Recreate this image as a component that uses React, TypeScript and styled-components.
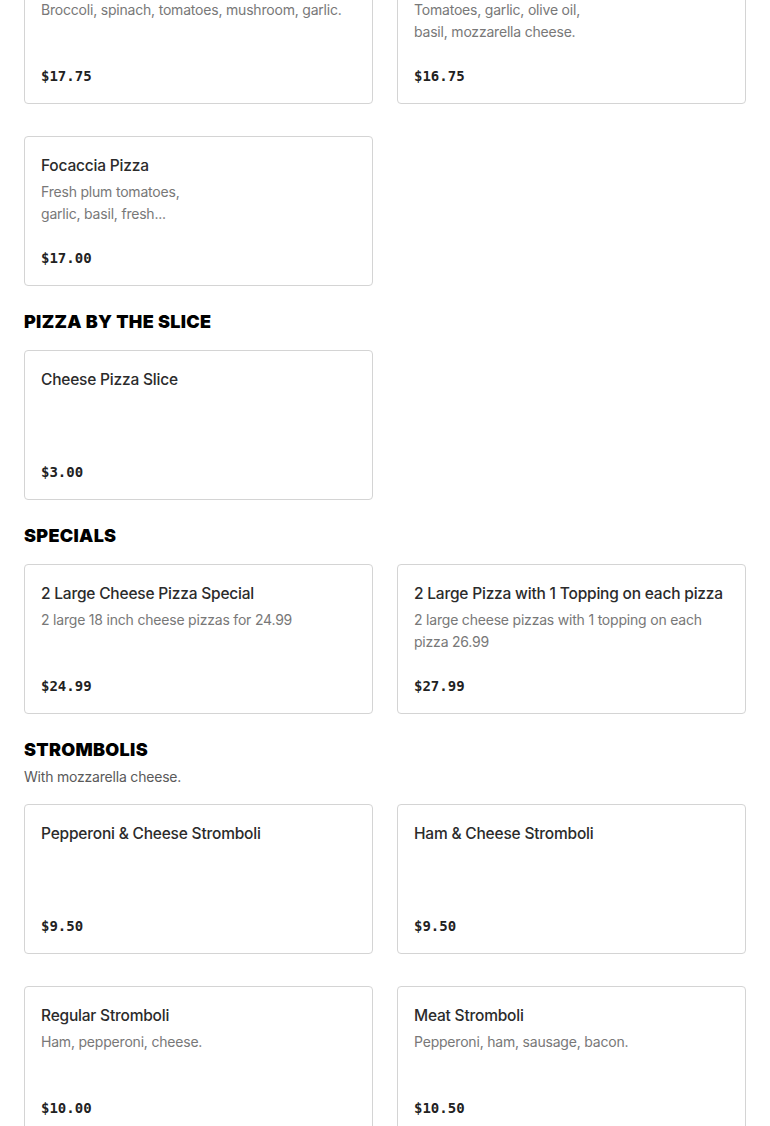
import React from 'react';
import styled, { createGlobalStyle } from 'styled-components';

const GlobalStyle = createGlobalStyle`
  html, body {
    margin: 0;
    padding: 0;
    background: #ffffff;
  }
  body {
    font-family: Inter, "Liberation Sans", sans-serif;
    -webkit-font-smoothing: antialiased;
  }
`;

type Item = { name: string; desc?: string[]; price: string };
type Section = { title?: string; note?: string; items: Item[] };

const menu: Section[] = [
  {
    items: [
      { name: 'Veggie Pizza', desc: ['Broccoli, spinach, tomatoes, mushroom, garlic.'], price: '$17.75' },
      { name: 'Margherita Pizza', desc: ['Tomatoes, garlic, olive oil,', 'basil, mozzarella cheese.'], price: '$16.75' },
      { name: 'Focaccia Pizza', desc: ['Fresh plum tomatoes,', 'garlic, basil, fresh...'], price: '$17.00' },
    ],
  },
  {
    title: 'Pizza by the Slice',
    items: [{ name: 'Cheese Pizza Slice', price: '$3.00' }],
  },
  {
    title: 'Specials',
    items: [
      { name: '2 Large Cheese Pizza Special', desc: ['2 large 18 inch cheese pizzas for 24.99'], price: '$24.99' },
      {
        name: '2 Large Pizza with 1 Topping on each pizza',
        desc: ['2 large cheese pizzas with 1 topping on each', 'pizza 26.99'],
        price: '$27.99',
      },
    ],
  },
  {
    title: 'Strombolis',
    note: 'With mozzarella cheese.',
    items: [
      { name: 'Pepperoni & Cheese Stromboli', price: '$9.50' },
      { name: 'Ham & Cheese Stromboli', price: '$9.50' },
      { name: 'Regular Stromboli', desc: ['Ham, pepperoni, cheese.'], price: '$10.00' },
      { name: 'Meat Stromboli', desc: ['Pepperoni, ham, sausage, bacon.'], price: '$10.50' },
    ],
  },
];

const Page = styled.main`
  padding: 0 24px 40px;
  margin-top: -46px;
`;

const SectionBlock = styled.section`
  & + & {
    margin-top: 24px;
  }
`;

const Heading = styled.h2`
  margin: 0;
  font-size: 18px;
  line-height: 24px;
  font-weight: 900;
  text-transform: uppercase;
  color: #000;
  letter-spacing: 0.3px;
`;

const Note = styled.p`
  margin: 4px 0 0;
  font-size: 14px;
  line-height: 22px;
  letter-spacing: -0.2px;
  color: #5a5a5a;
`;

const Grid = styled.div<{ $top: number }>`
  display: grid;
  grid-template-columns: 1fr 1fr;
  column-gap: 24px;
  row-gap: 32px;
  margin-top: ${(p) => p.$top}px;
`;

const Card = styled.article`
  box-sizing: border-box;
  height: 150px;
  border: 1px solid #d4d4d4;
  border-radius: 4px;
  padding: 16px 16px 17px;
  display: flex;
  flex-direction: column;
`;

const Name = styled.h3`
  margin: 0;
  padding-top: 1px;
  font-size: 15.5px;
  line-height: 24px;
  font-weight: 500;
  letter-spacing: -0.2px;
  color: #2b2b2b;
  white-space: nowrap;
`;

const Desc = styled.p`
  margin: 3px 0 0;
  font-size: 14px;
  line-height: 22px;
  letter-spacing: -0.2px;
  color: #787878;
`;

const Price = styled.div`
  margin-top: auto;
  font-family: "DejaVu Sans Mono", "Liberation Mono", monospace;
  font-size: 14px;
  line-height: 20px;
  font-weight: 700;
  color: #222;
`;

const App: React.FC = () => (
  <>
    <GlobalStyle />
    <Page>
      {menu.map((section, i) => (
        <SectionBlock key={i}>
          {section.title && <Heading>{section.title}</Heading>}
          {section.note && <Note>{section.note}</Note>}
          <Grid $top={section.title ? 16 : 0}>
            {section.items.map((item) => (
              <Card key={item.name}>
                <Name>{item.name}</Name>
                {item.desc && (
                  <Desc>
                    {item.desc.map((line, j) => (
                      <React.Fragment key={j}>
                        {j > 0 && <br />}
                        {line}
                      </React.Fragment>
                    ))}
                  </Desc>
                )}
                <Price>{item.price}</Price>
              </Card>
            ))}
          </Grid>
        </SectionBlock>
      ))}
    </Page>
  </>
);

export default App;
